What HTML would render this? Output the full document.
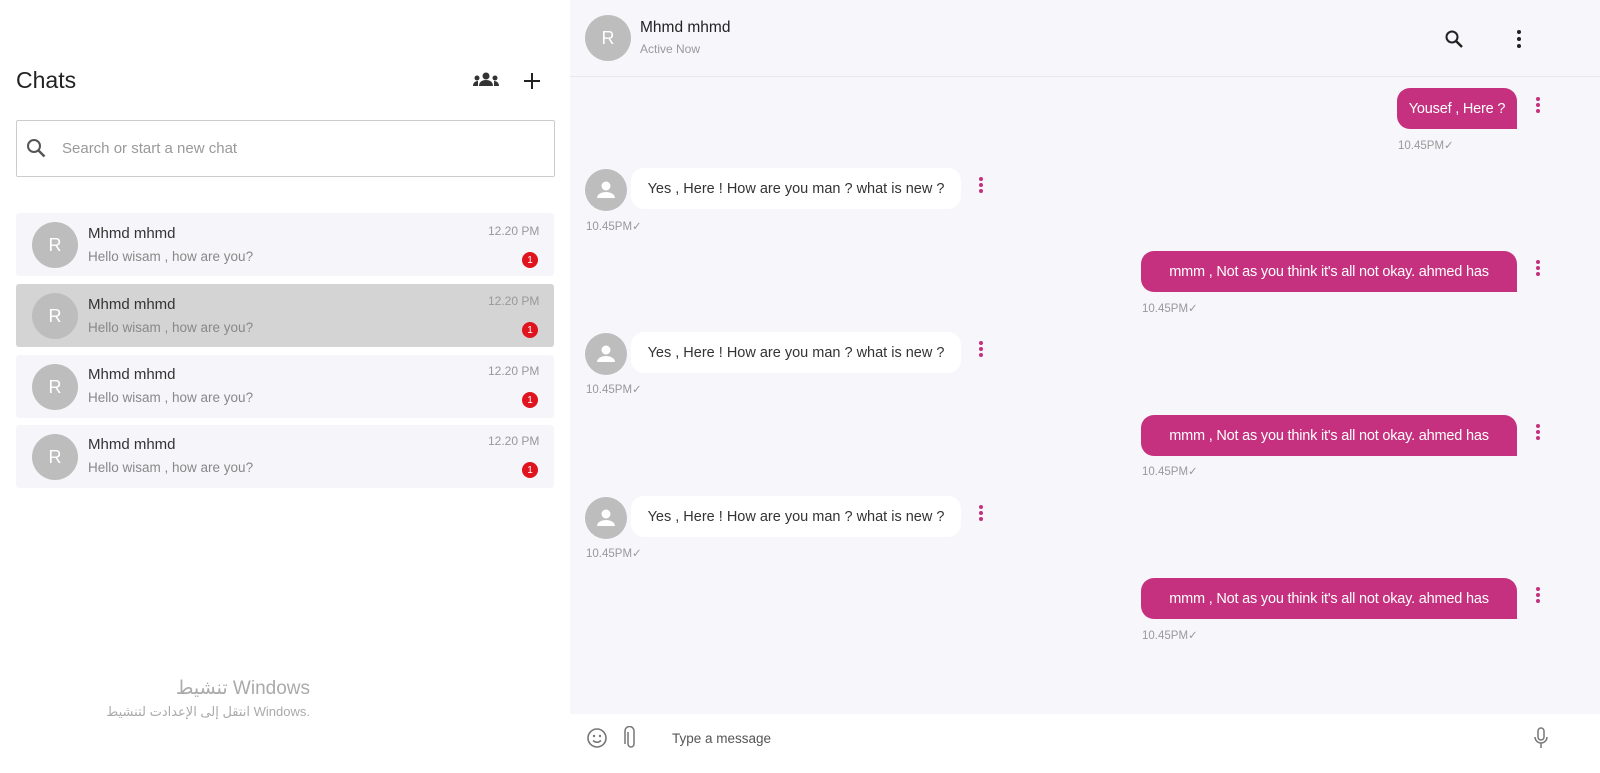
<!DOCTYPE html>
<html><head><meta charset="utf-8"><style>
*{margin:0;padding:0;box-sizing:border-box}
body{width:1600px;height:773px;overflow:hidden;font-family:"Liberation Sans","DejaVu Sans",sans-serif;background:#fff;position:relative}
.abs{position:absolute}
.left{left:0;top:0;width:570px;height:773px;background:#fff}
.right{left:570px;top:0;width:1030px;height:714px;background:#f7f7fb}
.hdr{left:570px;top:0;width:1030px;height:77px;border-bottom:1px solid #e8e8ee;background:#f7f7fb}
.av{border-radius:50%;background:#bdbdbd;color:#fff;display:flex;align-items:center;justify-content:center}
.item{left:16px;width:538px;height:63px;background:#f6f6fa;border-radius:3px}
.item.sel{background:#d4d4d4}
.name{font-size:15px;color:#333}
.prev{font-size:13.5px;color:#888}
.tm{font-size:12px;color:#999}
.badge{width:16px;height:16px;border-radius:50%;background:#e0141e;color:#fff;font-size:10px;display:flex;align-items:center;justify-content:center}
.sent{background:#c5317f;color:#fff;font-size:14.5px;height:41px;border-radius:13px 13px 0 13px;display:flex;align-items:center;justify-content:center;white-space:nowrap;letter-spacing:-0.2px}
.recv{background:#fff;color:#333;font-size:14.5px;height:41px;border-radius:13px;display:flex;align-items:center;justify-content:center;white-space:nowrap}
.t2{font-size:11.5px;color:#999}
.dots{width:4px}
.dots i{display:block;width:4px;height:4px;border-radius:50%;background:#c5317f;margin-bottom:2px}
</style></head><body>
<div class="abs left"></div>
<div class="abs right"></div>
<div class="abs hdr"></div>

<div class="abs" style="left:16px;top:67px;font-size:23px;color:#222">Chats</div>
<svg class="abs" style="left:472px;top:72px" width="28" height="16" viewBox="0 0 28 16"><circle cx="14" cy="4" r="3.5" fill="#333"/><path d="M7 14c0-4 3-6 7-6s7 2 7 6z" fill="#333"/><circle cx="5" cy="6" r="2.5" fill="#333"/><circle cx="23" cy="6" r="2.5" fill="#333"/><path d="M1 14c0-3 2-5 5-5v5z M27 14c0-3-2-5-5-5v5z" fill="#333"/></svg>
<svg class="abs" style="left:523px;top:72px" width="18" height="18"><path d="M9 1v16M1 9h16" stroke="#222" stroke-width="2"/></svg>

<div class="abs" style="left:16px;top:120px;width:539px;height:57px;border:1px solid #ccc;border-radius:2px;background:#fff"></div>
<svg class="abs" style="left:26px;top:138px" width="20" height="20"><circle cx="8" cy="8" r="6" stroke="#555" stroke-width="2" fill="none"/><path d="M12.5 12.5l6 6" stroke="#555" stroke-width="2.4"/></svg>
<div class="abs" style="left:62px;top:140px;font-size:15px;color:#999">Search or start a new chat</div>

<div class="abs item" style="top:213px"></div>
<div class="abs item sel" style="top:284px"></div>
<div class="abs item" style="top:355px"></div>
<div class="abs item" style="top:425px"></div>

<div class="abs av" style="left:32px;top:222px;width:46px;height:46px;font-size:18px">R</div>
<div class="abs av" style="left:32px;top:293px;width:46px;height:46px;font-size:18px">R</div>
<div class="abs av" style="left:32px;top:364px;width:46px;height:46px;font-size:18px">R</div>
<div class="abs av" style="left:32px;top:434px;width:46px;height:46px;font-size:18px">R</div>

<div class="abs name" style="left:88px;top:225px">Mhmd mhmd</div><div class="abs prev" style="left:88px;top:249px">Hello wisam , how are you?</div><div class="abs tm" style="left:488px;top:224px">12.20 PM</div><div class="abs badge" style="left:522px;top:252px">1</div>
<div class="abs name" style="left:88px;top:296px">Mhmd mhmd</div><div class="abs prev" style="left:88px;top:320px">Hello wisam , how are you?</div><div class="abs tm" style="left:488px;top:294px">12.20 PM</div><div class="abs badge" style="left:522px;top:322px">1</div>
<div class="abs name" style="left:88px;top:366px">Mhmd mhmd</div><div class="abs prev" style="left:88px;top:390px">Hello wisam , how are you?</div><div class="abs tm" style="left:488px;top:364px">12.20 PM</div><div class="abs badge" style="left:522px;top:392px">1</div>
<div class="abs name" style="left:88px;top:436px">Mhmd mhmd</div><div class="abs prev" style="left:88px;top:460px">Hello wisam , how are you?</div><div class="abs tm" style="left:488px;top:434px">12.20 PM</div><div class="abs badge" style="left:522px;top:462px">1</div>

<div class="abs" style="left:100px;top:677px;width:210px;text-align:right;font-size:19px;color:#aaa">تنشيط Windows</div>
<div class="abs" style="left:60px;top:704px;width:250px;text-align:right;font-size:13px;color:#aaa">انتقل إلى الإعدادت لتنشيط Windows.</div>

<div class="abs av" style="left:585px;top:15px;width:46px;height:46px;font-size:18px">R</div>
<div class="abs" style="left:640px;top:19px;font-size:15.5px;color:#222">Mhmd mhmd</div>
<div class="abs" style="left:640px;top:42px;font-size:12px;color:#999">Active Now</div>
<svg class="abs" style="left:1444px;top:29px" width="22" height="22"><circle cx="8" cy="8" r="5.5" stroke="#222" stroke-width="2" fill="none"/><path d="M12 12l6 6" stroke="#222" stroke-width="2.5"/></svg>
<svg class="abs" style="left:1515px;top:29px" width="8" height="20"><circle cx="4" cy="3" r="2" fill="#222"/><circle cx="4" cy="10" r="2" fill="#222"/><circle cx="4" cy="17" r="2" fill="#222"/></svg>

<div class="abs sent" style="left:1397px;top:88px;width:120px">Yousef , Here ?</div>
<div class="abs dots" style="left:1536px;top:97px"><i></i><i></i><i></i></div>
<div class="abs t2" style="left:1398px;top:138px">10.45PM✓</div>

<div class="abs av" style="left:585px;top:169px;width:42px;height:42px"><svg width="22" height="22" viewBox="0 0 22 22"><circle cx="11" cy="7" r="4.5" fill="#fff"/><path d="M2 19c0-4 5-6 9-6s9 2 9 6z" fill="#fff"/></svg></div>
<div class="abs recv" style="left:631px;top:168px;width:330px">Yes , Here ! How are you man ? what is new ?</div>
<div class="abs dots" style="left:979px;top:177px"><i></i><i></i><i></i></div>
<div class="abs t2" style="left:586px;top:219px">10.45PM✓</div>

<div class="abs sent" style="left:1141px;top:251px;width:376px">mmm , Not as you think it's all not okay. ahmed has</div>
<div class="abs dots" style="left:1536px;top:260px"><i></i><i></i><i></i></div>
<div class="abs t2" style="left:1142px;top:301px">10.45PM✓</div>

<div class="abs av" style="left:585px;top:333px;width:42px;height:42px"><svg width="22" height="22" viewBox="0 0 22 22"><circle cx="11" cy="7" r="4.5" fill="#fff"/><path d="M2 19c0-4 5-6 9-6s9 2 9 6z" fill="#fff"/></svg></div>
<div class="abs recv" style="left:631px;top:332px;width:330px">Yes , Here ! How are you man ? what is new ?</div>
<div class="abs dots" style="left:979px;top:341px"><i></i><i></i><i></i></div>
<div class="abs t2" style="left:586px;top:382px">10.45PM✓</div>

<div class="abs sent" style="left:1141px;top:415px;width:376px">mmm , Not as you think it's all not okay. ahmed has</div>
<div class="abs dots" style="left:1536px;top:424px"><i></i><i></i><i></i></div>
<div class="abs t2" style="left:1142px;top:464px">10.45PM✓</div>

<div class="abs av" style="left:585px;top:497px;width:42px;height:42px"><svg width="22" height="22" viewBox="0 0 22 22"><circle cx="11" cy="7" r="4.5" fill="#fff"/><path d="M2 19c0-4 5-6 9-6s9 2 9 6z" fill="#fff"/></svg></div>
<div class="abs recv" style="left:631px;top:496px;width:330px">Yes , Here ! How are you man ? what is new ?</div>
<div class="abs dots" style="left:979px;top:505px"><i></i><i></i><i></i></div>
<div class="abs t2" style="left:586px;top:546px">10.45PM✓</div>

<div class="abs sent" style="left:1141px;top:578px;width:376px">mmm , Not as you think it's all not okay. ahmed has</div>
<div class="abs dots" style="left:1536px;top:587px"><i></i><i></i><i></i></div>
<div class="abs t2" style="left:1142px;top:628px">10.45PM✓</div>

<svg class="abs" style="left:586px;top:727px" width="22" height="22"><circle cx="11" cy="11" r="9" stroke="#777" stroke-width="1.6" fill="none"/><circle cx="8" cy="9" r="1.2" fill="#777"/><circle cx="14" cy="9" r="1.2" fill="#777"/><path d="M7 13.5q4 3.5 8 0" stroke="#777" stroke-width="1.5" fill="none"/></svg>
<svg class="abs" style="left:624px;top:726px" width="14" height="24"><path d="M4 6v12a3 3 0 0 0 6 0V5a4.5 4.5 0 0 0-9 0v13" stroke="#777" stroke-width="1.5" fill="none"/></svg>
<div class="abs" style="left:672px;top:731px;font-size:13.5px;color:#555">Type a message</div>
<svg class="abs" style="left:1533px;top:727px" width="16" height="22"><rect x="5" y="1" width="6" height="12" rx="3" stroke="#777" stroke-width="1.5" fill="none"/><path d="M2 10a6 6 0 0 0 12 0M8 16v5" stroke="#777" stroke-width="1.5" fill="none"/></svg>
</body></html>
